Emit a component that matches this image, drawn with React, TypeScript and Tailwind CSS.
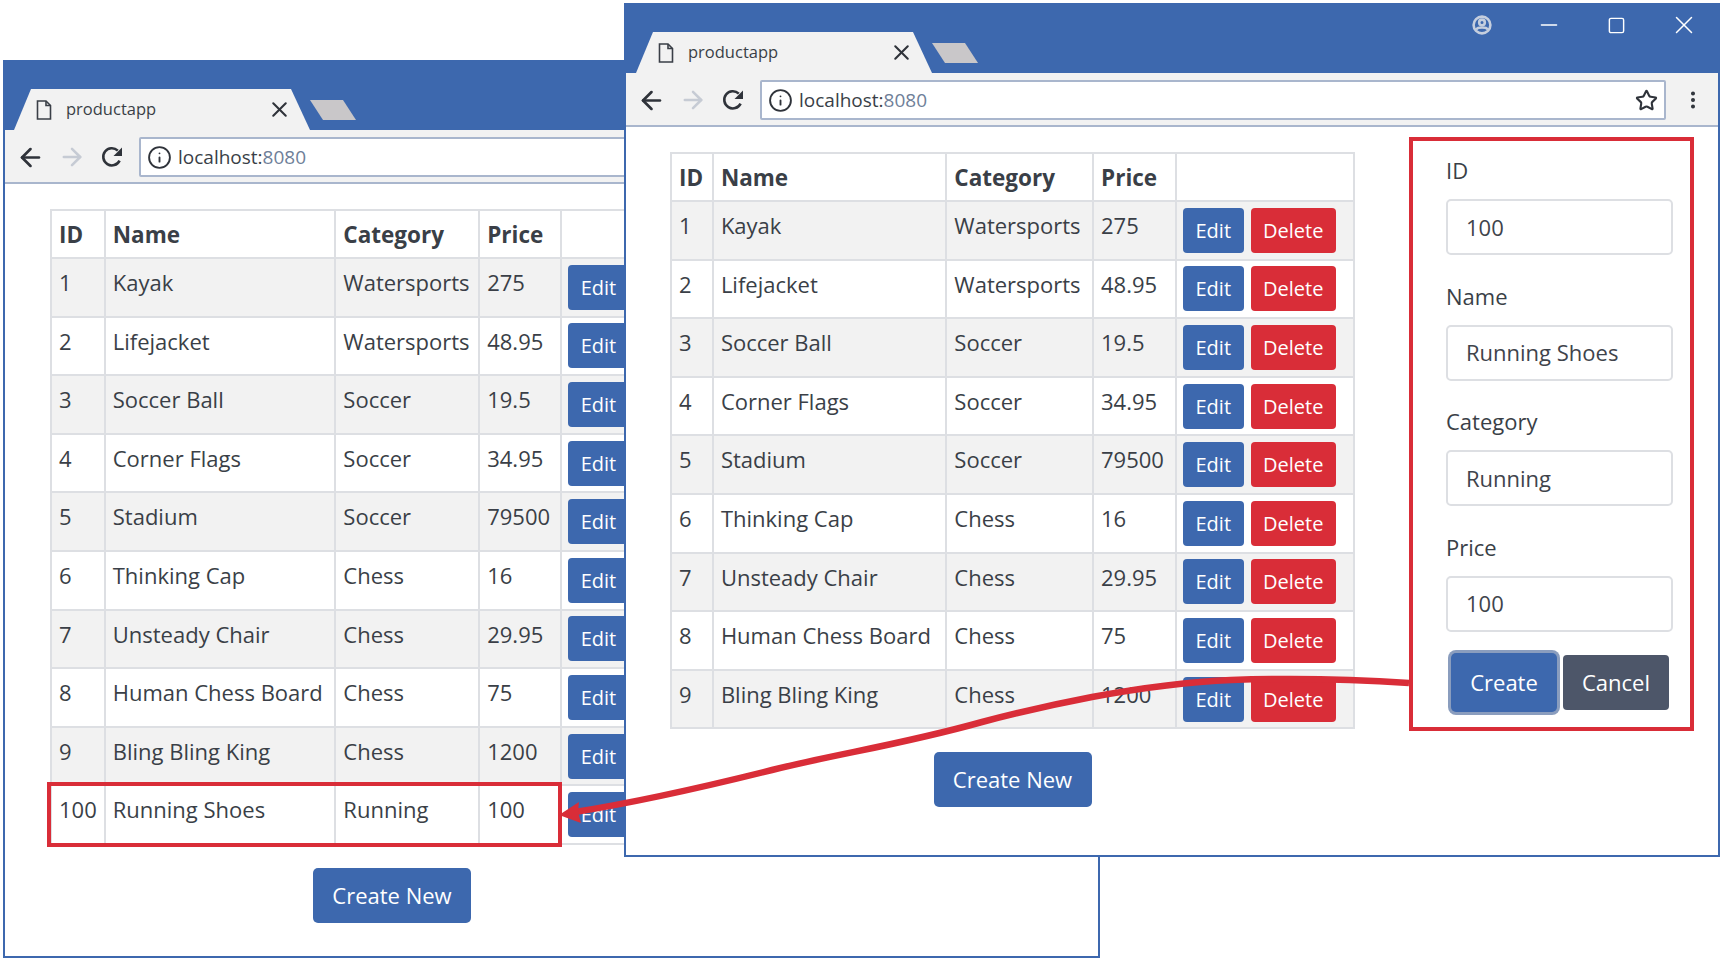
import { ArrowLeft, ArrowRight, Info, Minus, MoreVertical, Square, Star, X } from "lucide-react";

const products = [
  [1, "Kayak", "Watersports", "275"],
  [2, "Lifejacket", "Watersports", "48.95"],
  [3, "Soccer Ball", "Soccer", "19.5"],
  [4, "Corner Flags", "Soccer", "34.95"],
  [5, "Stadium", "Soccer", "79500"],
  [6, "Thinking Cap", "Chess", "16"],
  [7, "Unsteady Chair", "Chess", "29.95"],
  [8, "Human Chess Board", "Chess", "75"],
  [9, "Bling Bling King", "Chess", "1200"],
];

function FileGlyph() {
  return (
    <svg width="16" height="20" viewBox="0 0 16 20" fill="none" stroke="#3a3f47" strokeWidth="1.6">
      <path d="M1.5 1h8.5l4.5 4.5V19h-13z" />
      <path d="M10 1v4.5h4.5" />
    </svg>
  );
}

function ProfileGlyph() {
  return (
    <svg width="20" height="20" viewBox="0 0 20 20" fill="none" stroke="#c5cede" strokeWidth="2.6">
      <circle cx="10" cy="10" r="8.4" />
      <circle cx="10" cy="7.4" r="2.8" />
      <path d="M4 14.5c2-2.6 10-2.6 12 0" />
    </svg>
  );
}

function ReloadGlyph() {
  return (
    <svg width="24" height="24" viewBox="0 0 24 24" fill="none" className="ml-[14px]">
      <path d="M19.6 15.6A8.6 8.6 0 1 1 17.8 5.6" stroke="#2f333a" strokeWidth="2.6" />
      <path d="M22 2.5V11h-8.5z" fill="#2f333a" />
    </svg>
  );
}

function TitleBar({ left, controls }: { left: string; controls?: boolean }) {
  return (
    <div className={`flex h-[70px] items-end bg-[#3d68ae] ${left}`}>
      <div className="flex h-[41px] w-[296px] items-center bg-[#f2f2f2] pl-[22px] pr-[18px] [clip-path:polygon(0_100%,17px_0,277px_0,100%_100%)]">
        <FileGlyph />
        <span className="ml-[14px] flex-1 text-[16.5px] text-[#3a3f47]">productapp</span>
        <X size={25} strokeWidth={2} className="text-[#2f333a]" />
      </div>
      <div className="mb-[10px] h-[20px] w-[46px] bg-[#c9c7c9] [clip-path:polygon(0_0,33px_0,100%_100%,13px_100%)]" />
      {controls && (
        <div className="ml-auto flex h-full items-start pt-[10px] text-white">
          <div className="flex h-[24px] w-[67.5px] items-center justify-center"><ProfileGlyph /></div>
          <div className="flex h-[24px] w-[67.5px] items-center justify-center"><Minus size={26} strokeWidth={1.4} /></div>
          <div className="flex h-[24px] w-[67.5px] items-center justify-center"><Square size={19} strokeWidth={1.8} /></div>
          <div className="flex h-[24px] w-[67.5px] items-center justify-center"><X size={30} strokeWidth={1.2} /></div>
        </div>
      )}
    </div>
  );
}

function Toolbar() {
  return (
    <div className="flex h-[54px] items-start border-b-2 border-[#a9b6cd] bg-[#f2f2f2] pt-[7px]">
      <div className="flex h-[40px] w-[134px] shrink-0 items-center pl-[11px] text-[#2f333a]">
        <ArrowLeft size={29} strokeWidth={2.2} />
        <ArrowRight size={28} strokeWidth={2.2} className="ml-[13px] text-[#c6cbd4]" />
        <ReloadGlyph />
      </div>
      <div className="flex h-[40px] w-[906px] items-center rounded-[2px] border-2 border-[#a9b6cd] bg-white pl-[6px] pr-[6px]">
        <Info size={25} strokeWidth={1.8} className="text-[#2f333a]" />
        <span className="ml-[6px] flex-1 text-[19px] text-[#3a3f47]">
          localhost:<span className="text-[#6f7f99]">8080</span>
        </span>
        <Star size={23} strokeWidth={2.2} className="text-[#2f333a]" />
      </div>
      <div className="flex h-[40px] flex-1 justify-center pl-[1px] pt-[9px] text-[#2f333a]">
        <MoreVertical size={22} strokeWidth={2.4} />
      </div>
    </div>
  );
}

function ProductTable({ rows, widths }: { rows: (string | number)[][]; widths: string[] }) {
  return (
    <table className="table-fixed border-collapse text-[22px] leading-[30px] text-[#3a3f47]">
      <colgroup>
        {widths.map((w) => (
          <col key={w} className={w} />
        ))}
      </colgroup>
      <thead>
        <tr className="h-[48px] text-[22.5px] font-bold">
          {["ID", "Name", "Category", "Price", ""].map((h, i) => (
            <th key={i} className="border-2 border-[#dddfe3] px-[7px] pt-[2px] text-left">{h}</th>
          ))}
        </tr>
      </thead>
      <tbody>
        {rows.map((row, idx) => (
          <tr key={row[0]} className={`h-[58.6px] ${idx % 2 === 0 ? "bg-[#f2f2f2]" : "bg-white"}`}>
            {row.map((cell, i) => (
              <td key={i} className="whitespace-nowrap border-2 border-[#dddfe3] px-[7px] pb-[15px] pt-[8px] align-top">{cell}</td>
            ))}
            <td className="whitespace-nowrap border-2 border-[#dddfe3] px-[6px] py-0 align-middle">
              <div className="flex gap-[7px]">
                <button className="h-[45px] w-[61px] rounded-[4px] bg-[#3d68ae] pt-[1px] text-[20px] text-white">Edit</button>
                <button className="h-[45px] w-[85px] rounded-[4px] bg-[#d92d38] pt-[1px] text-[20px] text-white">Delete</button>
              </div>
            </td>
          </tr>
        ))}
      </tbody>
    </table>
  );
}

function CreateNew() {
  return (
    <button className="h-[55px] w-[158px] rounded-[5px] bg-[#3d68ae] text-[22px] text-white">Create New</button>
  );
}

function Field({ label, value }: { label: string; value: string }) {
  return (
    <div>
      <div className="mb-[12px] h-[34px] text-[22px] leading-[34px] text-[#3a3f47]">{label}</div>
      <div className="flex h-[56px] w-[227px] items-center rounded-[5px] border-2 border-[#dddfe3] bg-white px-[18px] text-[22px] text-[#3f444c]">
        {value}
      </div>
    </div>
  );
}

export default function App() {
  return (
    <div className="relative h-[963px] w-[1725px] overflow-hidden bg-white font-['Open_Sans',sans-serif]">
      {/* back window */}
      <div className="absolute left-[3px] top-[60px] h-[898px] w-[1097px] border-2 border-t-0 border-[#3d68ae] bg-white">
        <TitleBar left="pl-[9px]" />
        <Toolbar />
        <div className="w-[735px] pl-[45px] pt-[25px]">
          <ProductTable
            rows={[...products, [100, "Running Shoes", "Running", "100"]]}
            widths={["w-[53px]", "w-[231px]", "w-[144px]", "w-[82px]", "w-[179px]"]}
          />
          <div className="flex justify-center pr-[6px] pt-[23px]"><CreateNew /></div>
        </div>
      </div>

      {/* highlight round the new row */}
      <div className="absolute left-[47px] top-[782px] h-[65px] w-[515px] border-4 border-[#d92d38]" />

      {/* front window */}
      <div className="absolute left-[624px] top-[3px] h-[854px] w-[1096px] border-2 border-t-0 border-[#3d68ae] bg-white">
        <TitleBar left="pl-[10px]" controls />
        <Toolbar />
        <div className="flex pl-[44px]">
          <div className="w-[685px] pt-[25px]">
            <ProductTable
              rows={products}
              widths={["w-[42px]", "w-[234px]", "w-[147px]", "w-[83px]", "w-[179px]"]}
            />
            <div className="flex justify-center pt-[23px]"><CreateNew /></div>
          </div>
          <div className="ml-[54px] mt-[10px] h-[594px] w-[285px] border-4 border-[#d92d38] pl-[33px] pt-[12px]">
            <div className="flex flex-col gap-[23.6px]">
              <Field label="ID" value="100" />
              <Field label="Name" value="Running Shoes" />
              <Field label="Category" value="Running" />
              <Field label="Price" value="100" />
            </div>
            <div className="mt-[18px] flex h-[65px] items-center gap-[6px] pl-[5px]">
              <button className="h-[59px] w-[106px] rounded-[5px] bg-[#3d68ae] text-[22px] text-white ring-[3px] ring-[#8a9dbe]">Create</button>
              <button className="h-[55px] w-[106px] rounded-[4px] bg-[#4d5669] text-[22px] text-white">Cancel</button>
            </div>
          </div>
        </div>
      </div>

      {/* arrow from the form to the new row */}
      <svg className="absolute left-0 top-0" width="1725" height="963" fill="none">
        <path d="M1409 683C1350 679 1290 678 1231 680C1180 682 1130 690 1092 697C1050 705 1020 712 982 722C900 745 840 753 772 770C720 783 650 800 575 812" stroke="#d92d38" strokeWidth="6.5" />
        <path d="M559 815L579 802L578 812L581 823Z" fill="#d92d38" />
      </svg>
    </div>
  );
}
